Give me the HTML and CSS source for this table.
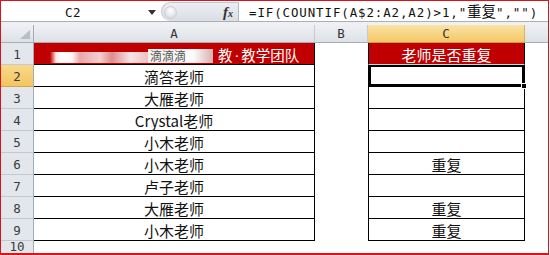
FILE: index.html
```html
<!DOCTYPE html>
<html>
<head>
<meta charset="utf-8">
<link rel="stylesheet" href="styles.css">
</head>
<body>
<div class="frame">
  <div class="fbar">
    <div class="namebox">C2</div>
    <div class="dd"><svg width="8" height="5" viewBox="0 0 8 5"><polygon points="0,0 8,0 4,5" fill="#333"/></svg></div>
    <div class="pill"><span class="knob"></span><span class="fx">f<span class="fxsub">x</span></span></div>
    <div class="formula">=IF(COUNTIF(A$2:A2,A2)&gt;1,"<span class="cjk">重复</span>","")</div>
  </div>
  <div class="strip"></div>
  <div class="sheet">
    <div class="ch corner"><svg width="10" height="9" viewBox="0 0 10 9"><polygon points="10,0 10,9 0,9" fill="#b9bec5"/></svg></div>
    <div class="ch">A</div>
    <div class="ch">B</div>
    <div class="ch selcol">C</div>
    <div class="ch last"></div>

    <div class="rh">1</div>
    <div class="cell a red">
      <span class="blur"></span><span class="ddd">滴滴滴</span><span class="t1">教<span class="dot">·</span>教学团队</span>
    </div>
    <div class="cell b"></div>
    <div class="cell c red c1">老师是否重复</div>
    <div class="cell d"></div>

    <div class="rh selrow">2</div>
    <div class="cell a">滴答老师</div>
    <div class="cell b"></div>
    <div class="cell c sel"><span class="handle"></span></div>
    <div class="cell d"></div>

    <div class="rh">3</div>
    <div class="cell a">大雁老师</div>
    <div class="cell b"></div>
    <div class="cell c"></div>
    <div class="cell d"></div>

    <div class="rh">4</div>
    <div class="cell a">Crystal老师</div>
    <div class="cell b"></div>
    <div class="cell c"></div>
    <div class="cell d"></div>

    <div class="rh">5</div>
    <div class="cell a">小木老师</div>
    <div class="cell b"></div>
    <div class="cell c"></div>
    <div class="cell d"></div>

    <div class="rh">6</div>
    <div class="cell a">小木老师</div>
    <div class="cell b"></div>
    <div class="cell c">重复</div>
    <div class="cell d"></div>

    <div class="rh">7</div>
    <div class="cell a">卢子老师</div>
    <div class="cell b"></div>
    <div class="cell c"></div>
    <div class="cell d"></div>

    <div class="rh">8</div>
    <div class="cell a">大雁老师</div>
    <div class="cell b"></div>
    <div class="cell c">重复</div>
    <div class="cell d"></div>

    <div class="rh">9</div>
    <div class="cell a">小木老师</div>
    <div class="cell b"></div>
    <div class="cell c">重复</div>
    <div class="cell d"></div>

    <div class="rh lastrow">10</div>
    <div class="cell e"></div>
    <div class="cell e"></div>
    <div class="cell e"></div>
    <div class="cell e"></div>
  </div>
</div>
</body>
</html>
```

FILE: styles.css
```css
* { box-sizing: border-box; }
html, body { margin: 0; padding: 0; background: #fff; }
body { width: 550px; height: 255px; overflow: hidden; }

.frame {
  width: 549px;
  height: 255px;
  border: 1px solid #d8141c;
  border-bottom-width: 2px;
  overflow: hidden;
  display: flex;
  flex-direction: column;
  background: #fff;
}

/* formula bar */
.fbar {
  height: 21px;
  flex: none;
  display: flex;
  align-items: center;
  border-bottom: 1px solid #a9b0b8;
  background: #fff;
}
.namebox {
  width: 144px;
  text-align: center;
  font-family: "DejaVu Sans Mono", "Liberation Mono", monospace;
  font-size: 12.5px;
  letter-spacing: 0.5px;
  color: #111;
  padding-top: 2px;
}
.dd {
  width: 14px;
  display: flex;
  justify-content: center;
  align-items: center;
  padding-top: 2px;
}
.pill {
  margin-left: 2px;
  width: 78px;
  height: 19px;
  align-self: flex-end;
  background: linear-gradient(#eceef1, #dadee3);
  border: 1px solid #c3c8ce;
  border-right: 1px solid #b3b9c1;
  border-bottom: none;
  border-radius: 10px 0 0 10px;
  display: flex;
  align-items: center;
  justify-content: space-between;
  padding: 0 5px 0 2px;
}
.knob {
  width: 13px;
  height: 13px;
  border-radius: 50%;
  background: radial-gradient(circle at 50% 35%, #ffffff 0, #e4e7eb 55%, #c9ced4 100%);
  border: 1px solid #c9ced4;
}
.fx {
  font-family: "Liberation Serif", serif;
  font-style: italic;
  font-weight: bold;
  font-size: 15px;
  color: #333;
  line-height: 1;
}
.fxsub { font-size: 10px; }
.formula {
  padding-left: 10px;
  font-family: "DejaVu Sans Mono", "Noto Sans CJK SC", monospace;
  font-size: 12.45px;
  letter-spacing: 0.9px;
  color: #111;
  white-space: nowrap;
  padding-top: 2px;
}
.formula .cjk {
  font-family: "Noto Sans CJK SC", sans-serif;
  font-size: 14.5px;
  letter-spacing: 0;
  line-height: 1;
}

.strip {
  height: 3px;
  flex: none;
  background: #eef0f3;
}

/* sheet grid */
.sheet {
  display: grid;
  grid-template-columns: 33px 281px 53px 157px 23px;
  grid-template-rows: 18px;
  grid-auto-rows: 22px;
  font-family: "Noto Sans CJK SC", "Liberation Sans", sans-serif;
}

.ch {
  background: linear-gradient(#eef0f3, #dde1e6);
  border-right: 1px solid #c4c9d0;
  border-bottom: 1px solid #a5adb7;
  font-family: "DejaVu Sans Mono", "Liberation Mono", monospace;
  font-size: 12.5px;
  color: #333;
  display: flex;
  justify-content: center;
  align-items: flex-end;
  line-height: 16px;
}
.ch.corner {
  justify-content: flex-end;
  align-items: flex-end;
  padding: 0 3px 3px 0;
  border-right-color: #a5adb7;
}
.ch.selcol {
  background: linear-gradient(#fbe3a5, #f4c766);
  border-right-color: #d9b35c;
  border-bottom-color: #c99f43;
}
.ch.last { border-right: none; }

.rh {
  background: #e3e7ec;
  border-right: 1px solid #a5adb7;
  border-bottom: 1px solid #c4c9d0;
  font-family: "DejaVu Sans Mono", "Liberation Mono", monospace;
  font-size: 12.5px;
  color: #3a3a3a;
  display: flex;
  justify-content: center;
  align-items: flex-end;
  padding-bottom: 2px;
}
.rh.selrow {
  background: linear-gradient(#f9d98b, #f3c55f);
  border-bottom-color: #d2a64c;
}
.rh.lastrow {
  align-items: flex-start;
  padding-bottom: 0;
  padding-top: 0;
  line-height: 11px;
}

.cell {
  display: flex;
  justify-content: center;
  align-items: center;
  font-size: 15px;
  color: #111;
  padding-top: 2px;
  white-space: nowrap;
}
.cell.a {
  border-right: 1px solid #000;
  border-bottom: 1px solid #000;
}
.cell.c {
  border-left: 1px solid #000;
  border-right: 1px solid #000;
  border-bottom: 1px solid #000;
}
.cell.red {
  background: #c00000;
  color: #fff;
}
.cell.c1 { border-bottom-color: #a8e2ee; }
.cell.sel {
  position: relative;
  box-shadow: inset 0 0 0 2px #000;
}
.handle {
  position: absolute;
  right: -3px;
  bottom: -3px;
  width: 6px;
  height: 6px;
  background: #000;
  border: 1px solid #fff;
}

/* row 1 smudge */
.cell.a.red {
  align-items: stretch;
  padding-top: 0;
}
.blur {
  width: 98px;
  height: 11px;
  align-self: flex-end;
  margin-bottom: 1px;
  background: linear-gradient(to right, #c00000 0, #fbe9e9 6px, #ffffff 12px, #fff6f6 22px, #e9a9a9 30px, #f3cfcf 50px, #dd8d8d 62px, #f7e4e4 80px, #eec3c3 98px);
}
.ddd {
  width: 65px;
  height: 14px;
  align-self: flex-end;
  margin-bottom: 1px;
  background: linear-gradient(to right, #f2f2f2, #fafafa 70%, #d9b1b1 100%);
  color: #555;
  font-size: 12px;
  line-height: 14px;
  padding-left: 2px;
}
.t1 {
  margin-left: 5px;
  width: 80px;
  display: flex;
  align-items: center;
  padding-top: 2px;
  font-size: 14.5px;
  color: #fff;
}
.t1 .dot {
  font-family: "Liberation Sans", sans-serif;
  padding: 0 2px;
}
```
